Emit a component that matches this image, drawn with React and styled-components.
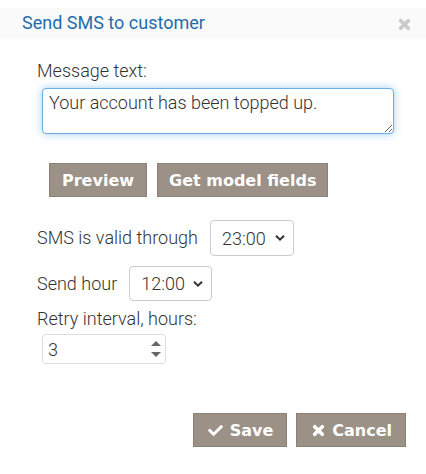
import React from "react";
import styled, { createGlobalStyle } from "styled-components";
import { FaCheck } from "react-icons/fa";

const Global = createGlobalStyle`
  html, body {
    margin: 0;
    padding: 0;
    background: #fff;
  }
  body {
    font-family: Roboto, "Noto Sans", sans-serif;
    color: #333;
  }
`;

const Dialog = styled.div`
  width: 426px;
  height: 474px;
  padding-top: 8px;
  box-sizing: border-box;
  display: flex;
  flex-direction: column;
`;

const Header = styled.div`
  height: 30px;
  background: #fafafa;
  display: flex;
  align-items: center;
  justify-content: space-between;
  padding: 0 15px 0 22px;
`;

const Title = styled.h2`
  margin: 0;
  font-size: 18px;
  font-weight: 400;
  color: #1f6dab;
  line-height: 30px;
`;

const Close = styled.span`
  display: flex;
  margin-top: 2px;
`;

const Body = styled.div`
  padding: 21px 0 0 37px;
  display: flex;
  flex-direction: column;
`;

const Label = styled.label`
  font-size: 18px;
  font-weight: 300;
  color: #333;
  line-height: 24px;
  margin-top: ${p => p.$top || 0}px;
`;

const TextArea = styled.textarea`
  margin: 5px 0 0 5px;
  width: 352px;
  height: 46px;
  box-sizing: border-box;
  border: 1px solid #66afe9;
  border-radius: 4px;
  box-shadow: 0 0 8px rgba(102, 175, 233, 0.6);
  outline: none;
  padding: 2px 6px;
  font-family: Roboto, sans-serif;
  font-size: 18px;
  font-weight: 300;
  color: #333;
  line-height: 24px;
  resize: vertical;
`;

const ButtonRow = styled.div`
  display: flex;
  gap: ${p => p.$gap || 10}px;
  margin: ${p => p.$top}px 0 0 ${p => p.$left}px;
  padding-right: ${p => (p.$end ? 20 : 0)}px;
  justify-content: ${p => (p.$end ? "flex-end" : "flex-start")};
`;

const Button = styled.button`
  height: 34px;
  padding: 0 ${p => p.$pr || 12}px 0 ${p => p.$pl || 12}px;
  background: #9c9186;
  border: 1px solid #8b8076;
  color: #fff;
  font-family: "DejaVu Sans", Verdana, sans-serif;
  font-weight: bold;
  font-size: 16px;
  display: flex;
  align-items: center;
  gap: 7px;
  cursor: pointer;
  svg {
    flex: none;
  }
`;

const FieldRow = styled.div`
  display: flex;
  align-items: center;
  gap: 12px;
  margin-top: ${p => p.$top}px;
`;

const SelectWrap = styled.div`
  position: relative;
  width: ${p => p.$w}px;
  height: ${p => p.$h}px;
`;

const Select = styled.select`
  appearance: none;
  width: 100%;
  height: 100%;
  box-sizing: border-box;
  border: 1px solid #ccc;
  border-radius: 4px;
  background: #fff;
  padding: 0 0 0 11px;
  font-family: Roboto, sans-serif;
  font-size: 18px;
  font-weight: 300;
  color: #333;
  outline: none;
`;

const Chevron = styled.svg`
  position: absolute;
  right: 9px;
  top: 50%;
  transform: translateY(-50%);
  pointer-events: none;
`;

const NumberWrap = styled.div`
  position: relative;
  width: 124px;
  height: 30px;
  margin: 3px 0 0 5px;
`;

const NumberInput = styled.input`
  width: 100%;
  height: 100%;
  box-sizing: border-box;
  border: 1px solid #ddd;
  border-radius: 4px;
  padding: 0 5px;
  font-family: Roboto, sans-serif;
  font-size: 18px;
  font-weight: 300;
  color: #333;
  outline: none;
  -moz-appearance: textfield;
  &::-webkit-inner-spin-button,
  &::-webkit-outer-spin-button {
    -webkit-appearance: none;
    margin: 0;
  }
`;

const Spinner = styled.svg`
  position: absolute;
  right: 5px;
  top: 5px;
  pointer-events: none;
`;

// thick "times" cross like the old Font Awesome glyph
const XIcon = ({ size, color }) => (
  <svg width={size} height={size} viewBox="0 0 12 12">
    <path
      d="M2.5 2.5 L9.5 9.5 M9.5 2.5 L2.5 9.5"
      stroke={color}
      strokeWidth="3.4"
      strokeLinecap="round"
      fill="none"
    />
  </svg>
);

const ChevronIcon = () => (
  <Chevron width="10" height="7" viewBox="0 0 10 7">
    <path d="M1 1.2 L5 5.2 L9 1.2" fill="none" stroke="#333" strokeWidth="2" />
  </Chevron>
);

const TimeSelect = ({ value, w, h }) => (
  <SelectWrap $w={w} $h={h}>
    <Select defaultValue={value}>
      {["12:00", "23:00"].map(v => (
        <option key={v}>{v}</option>
      ))}
    </Select>
    <ChevronIcon />
  </SelectWrap>
);

export default function App() {
  return (
    <>
      <Global />
      <Dialog>
        <Header>
          <Title>Send SMS to customer</Title>
          <Close>
            <XIcon size={13} color="#cacaca" />
          </Close>
        </Header>
        <Body>
          <Label>Message text:</Label>
          <TextArea defaultValue="Your account has been topped up." />
          <ButtonRow $top={29} $left={12}>
            <Button>Preview</Button>
            <Button $pl={11} $pr={11}>Get model fields</Button>
          </ButtonRow>
          <FieldRow $top={23}>
            <Label>SMS is valid through</Label>
            <TimeSelect value="23:00" w={84} h={36} />
          </FieldRow>
          <FieldRow $top={10}>
            <Label>Send hour</Label>
            <TimeSelect value="12:00" w={83} h={35} />
          </FieldRow>
          <Label $top={6}>Retry interval, hours:</Label>
          <NumberWrap>
            <NumberInput type="number" defaultValue={3} />
            <Spinner width="10" height="20" viewBox="0 0 10 20">
              <path d="M0 7 L5 2 L10 7 Z" fill="#666" />
              <path d="M0 13 L10 13 L5 18 Z" fill="#666" />
            </Spinner>
          </NumberWrap>
        </Body>
        <ButtonRow $top={49} $left={0} $gap={9} $end>
          <Button $pl={14} $pr={13}>
            <FaCheck size={15} />
            Save
          </Button>
          <Button $pl={15} $pr={13}>
            <XIcon size={13} color="#fff" />
            Cancel
          </Button>
        </ButtonRow>
      </Dialog>
    </>
  );
}
